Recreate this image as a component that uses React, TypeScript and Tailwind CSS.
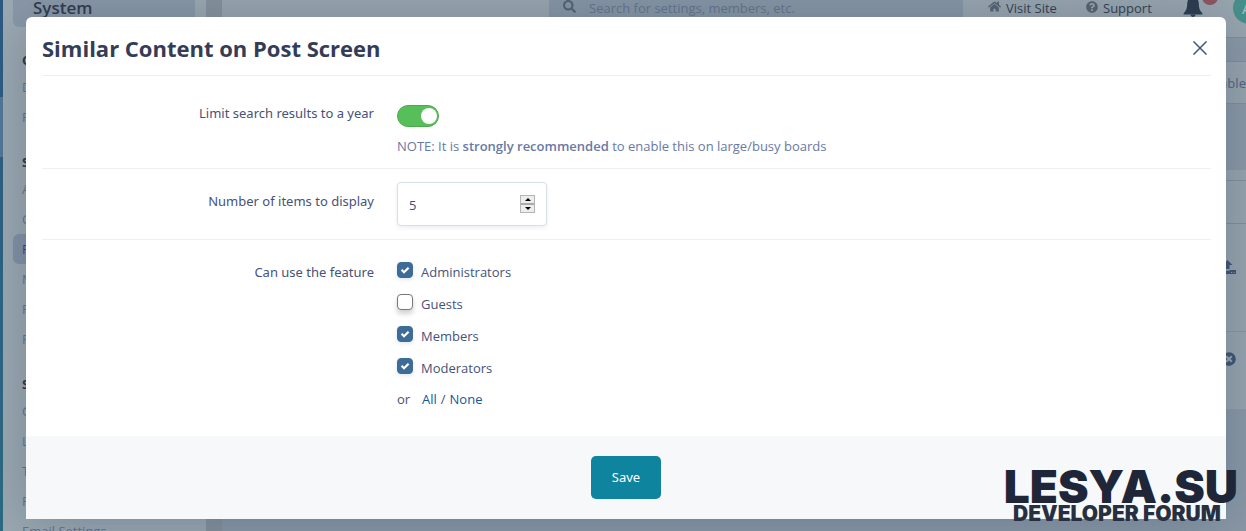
import { useState } from "react";
import { FaHome, FaQuestionCircle, FaSearch, FaTimesCircle } from "react-icons/fa";

interface MenuGroup {
  title: string;
  items: string[];
}

const MENU: MenuGroup[] = [
  { title: "Overview", items: ["Dashboard", "Files"] },
  { title: "Site Features", items: ["Applications", "Cloud", "Plugins", "Marketplace", "Reactions", "Files"] },
  { title: "Settings", items: ["General", "Login", "Terms", "Posting", "Email Settings"] },
];

const GROUPS = ["Administrators", "Guests", "Members", "Moderators"];

function CloseIcon() {
  return (
    <svg width="14" height="14" viewBox="0 0 14 14" fill="none" stroke="currentColor" strokeWidth="1.5">
      <path d="M0.5 0.5L13.5 13.5M13.5 0.5L0.5 13.5" />
    </svg>
  );
}

function BellIcon() {
  return (
    <svg width="20" height="21" viewBox="0 0 20 21" fill="currentColor">
      <path d="M10 0C10.9 0 11.4 0.7 11.3 1.5C14.4 2.2 15.8 4.6 15.8 7.6C15.8 12 16.6 14.8 19.4 17.2V18.5H0.6V17.2C3.4 14.8 4.2 12 4.2 7.6C4.2 4.6 5.6 2.2 8.7 1.5C8.6 0.7 9.1 0 10 0Z" />
      <path d="M7.5 18.5H12.5C12.5 20 11.4 21 10 21C8.6 21 7.5 20 7.5 18.5Z" />
    </svg>
  );
}

function CheckIcon() {
  return (
    <svg
      width="16"
      height="16"
      viewBox="0 0 16 16"
      fill="none"
      stroke="currentColor"
      strokeWidth="2.2"
      className="pointer-events-none absolute inset-0 text-white"
    >
      <path d="M4.6 7.8L7 10.2L11.6 5.8" />
    </svg>
  );
}

function UploadIcon() {
  return (
    <svg width="14" height="14" viewBox="0 0 14 14" fill="currentColor">
      <path d="M5.5 0L10.5 5H7.5V9H3.5V5H0.5Z" />
      <path fillRule="evenodd" d="M0 10H3.5V10.8H7.5V10H14V14H0ZM9 12V13H10V12ZM11.4 12V13H12.4V12Z" />
    </svg>
  );
}

function Sidebar() {
  return (
    <nav className="w-[203px] shrink-0 bg-[#9ca9b2]">
      <div className="mr-[11px] mb-[3px] ml-[10px] h-[27px] rounded-b-md bg-[#8a98a7] pl-5 font-['Open_Sans',sans-serif] text-[17px] leading-4 font-semibold text-[#2f3a4c]">
        System
      </div>
      {MENU.map((group) => (
        <div key={group.title} className="pt-[18px] font-['Open_Sans',sans-serif] text-[13px]">
          <h2 className="h-6 pl-[19px] leading-6 font-bold text-[#2a3342]">{group.title}</h2>
          <ul>
            {group.items.map((item) => (
              <li
                key={item}
                className={`mr-[11px] ml-[10px] h-[30px] rounded-md pl-[9px] leading-[30px] ${
                  item === "Plugins" ? "bg-[#8391a4] text-[#3b4860]" : "text-[#62728f]"
                }`}
              >
                {item}
              </li>
            ))}
          </ul>
        </div>
      ))}
    </nav>
  );
}

function Backdrop() {
  return (
    <div className="flex h-full" aria-hidden="true">
      <div className="flex w-[3px] shrink-0 flex-col bg-linear-to-b from-[#2d5982] to-[#2b6c83]">
        <div className="mt-[97px] h-[60px] bg-[#527896]" />
      </div>
      <Sidebar />
      <div className="w-4 shrink-0 border-r border-[#83919e] bg-[#87929b]" />
      <div className="min-w-0 flex-1 bg-[#8b99a6]">
        <header className="flex h-[38px] border-b border-[#808e9c] bg-[#99a6af] font-['Open_Sans',sans-serif] text-[13px]">
          <div className="ml-[327px] flex h-[17px] flex-1 items-start bg-[#8796a5] pl-[14px] text-[#64748a]">
            <FaSearch className="mr-[13px] size-[13px] text-[#536274]" />
            <span className="leading-4">Search for settings, members, etc.</span>
          </div>
          <div className="flex w-[283px] leading-4 font-medium text-[#303d50]">
            <FaHome className="ml-[25px] size-[13px] shrink-0 text-[#56636f]" />
            <span className="ml-[5px] w-20 shrink-0">Visit Site</span>
            <FaQuestionCircle className="mt-px size-3 shrink-0 text-[#56636f]" />
            <span className="ml-[5px] w-20 shrink-0">Support</span>
            <span className="relative w-[50px] shrink-0">
              <span className="-mt-1 block text-[#2c3a4e]">
                <BellIcon />
              </span>
              <span className="absolute -top-[11px] left-[19px] size-4 rounded-full bg-[#8d555f]" />
            </span>
            <span className="-mt-2 size-8 shrink-0 rounded-full bg-[#47908c] pt-2 pl-[9px] text-[15px] text-[#a9c6c4]">
              A
            </span>
          </div>
        </header>
        <div className="mt-[23px] h-[43px] overflow-hidden border-y border-[#808e9c] bg-[#98a5ae] text-right text-[13px] leading-[42px] text-[#55637f]">
          Enable
        </div>
        <div className="mt-[66px] h-[239px] bg-[#98a5ae] pt-[10px] text-[#3e5371]">
          <div className="h-11 border-y border-[#808e9e]" />
          <div className="flex h-[108px] justify-end border-b border-[#8996a2] pt-9 pr-[10px]">
            <UploadIcon />
          </div>
          <div className="flex justify-end pt-5 pr-[10px]">
            <FaTimesCircle className="size-[14px]" />
          </div>
        </div>
      </div>
    </div>
  );
}

export default function App() {
  const [open, setOpen] = useState(true);
  const [limit, setLimit] = useState(true);
  const [count, setCount] = useState(5);
  const [allowed, setAllowed] = useState(["Administrators", "Members", "Moderators"]);

  const toggle = (name: string) =>
    setAllowed(allowed.includes(name) ? allowed.filter((n) => n !== name) : [...allowed, name]);

  return (
    <div className="relative h-screen overflow-hidden font-['Noto_Sans',sans-serif]">
      <Backdrop />

      {open && (
        <div className="absolute inset-0 pt-[17px] pr-5 pl-[26px]">
          <div
            role="dialog"
            aria-labelledby="dialog-title"
            className="rounded-t-md bg-white text-[13px] text-[#46527a] shadow-[0_5px_55px_#35496459]"
          >
            <div className="pr-[15px] pl-4">
              <div className="flex h-[59px] items-center justify-between border-b border-[#eeeff2] pt-1 pr-1">
                <h1 id="dialog-title" className="font-['Open_Sans',sans-serif] text-[22px] font-bold text-[#353c56]">
                  Similar Content on Post Screen
                </h1>
                <button type="button" aria-label="Close" onClick={() => setOpen(false)}>
                  <CloseIcon />
                </button>
              </div>

              <div className="flex h-[93px] gap-[23px] border-b border-[#eef0f5] pt-[27px]">
                <label htmlFor="limit" className="w-[332px] text-right leading-5">
                  Limit search results to a year
                </label>
                <div>
                  <input
                    id="limit"
                    type="checkbox"
                    checked={limit}
                    onChange={() => setLimit(!limit)}
                    className="mt-[2px] block h-[22px] w-[42px] appearance-none rounded-full border border-[#b9c0ca] bg-[#c9ced6] p-[2px] before:block before:size-4 before:rounded-full before:bg-white checked:border-[#4bac4e] checked:bg-[#57bf5a] checked:before:ml-[21px]"
                  />
                  <p className="mt-[9px] font-['Open_Sans',sans-serif] leading-5 text-[#6879a5]">
                    NOTE: It is <strong className="font-semibold">strongly recommended</strong> to enable this on
                    large/busy boards
                  </p>
                </div>
              </div>

              <div className="flex h-[71px] gap-[23px] border-b border-[#eef0f5] pt-[13px]">
                <label htmlFor="count" className="w-[332px] pt-[9px] text-right leading-5">
                  Number of items to display
                </label>
                <div className="relative h-11 w-[150px]">
                  <input
                    id="count"
                    type="number"
                    value={count}
                    onChange={(e) => setCount(Number(e.target.value))}
                    className="h-full w-full appearance-none rounded border border-[#dadeea] bg-white px-[11px] pt-[2px] shadow-[0_2px_4px_#eceef3] [-moz-appearance:textfield] [&::-webkit-inner-spin-button]:appearance-none"
                  />
                  <div className="absolute top-[13px] right-3 flex h-[18px] w-[15px] flex-col border border-[#b5b5b5] bg-[#ededed]">
                    <button
                      type="button"
                      aria-label="Increase"
                      onClick={() => setCount(count + 1)}
                      className="flex flex-1 items-center justify-center border-b-2 border-[#aaa]"
                    >
                      <svg width="6" height="3" viewBox="0 0 6 3">
                        <path d="M0 3L3 0L6 3Z" />
                      </svg>
                    </button>
                    <button
                      type="button"
                      aria-label="Decrease"
                      onClick={() => setCount(count - 1)}
                      className="flex flex-1 items-center justify-center"
                    >
                      <svg width="6" height="3" viewBox="0 0 6 3">
                        <path d="M0 0L3 3L6 0Z" />
                      </svg>
                    </button>
                  </div>
                </div>
              </div>

              <fieldset aria-labelledby="groups-title" className="flex h-[196px] gap-[23px] pt-[22px]">
                <div id="groups-title" className="w-[332px] text-right leading-5">
                  Can use the feature
                </div>
                <div className="font-['Open_Sans',sans-serif]">
                  {GROUPS.map((name) => (
                    <label key={name} className="flex h-8 items-start gap-2 leading-5">
                      <span className="relative size-4">
                        <input
                          type="checkbox"
                          checked={allowed.includes(name)}
                          onChange={() => toggle(name)}
                          className="block size-4 appearance-none rounded border border-[#777] bg-white shadow-[0_4px_5px_#0000002e] checked:border-[#3d6c99] checked:bg-[#3d6c99] checked:shadow-[0_2px_4px_#e4e8ef]"
                        />
                        {allowed.includes(name) && <CheckIcon />}
                      </span>
                      {name}
                    </label>
                  ))}
                  <div className="flex leading-[18px]">
                    <span className="w-[25px]">or</span>
                    <button type="button" className="text-[#12599c]" onClick={() => setAllowed(GROUPS)}>
                      All
                    </button>
                    <span className="px-1">/</span>
                    <button type="button" className="text-[#12599c]" onClick={() => setAllowed([])}>
                      None
                    </button>
                  </div>
                </div>
              </fieldset>
            </div>

            <div className="flex h-[83px] items-center justify-center bg-[#f6f8fa]">
              <button type="button" className="h-[43px] w-[70px] rounded-[5px] bg-[#0e849f] text-white">
                Save
              </button>
            </div>
          </div>
        </div>
      )}

      <div className="absolute right-2 bottom-[7px] flex flex-col items-center font-['Inter',sans-serif] font-black text-[#1f2637]">
        <div className="text-[46px] leading-9">LESYA.SU</div>
        <div className="pr-2 text-[21px] leading-5 text-[#263040]">DEVELOPER FORUM</div>
      </div>
    </div>
  );
}
